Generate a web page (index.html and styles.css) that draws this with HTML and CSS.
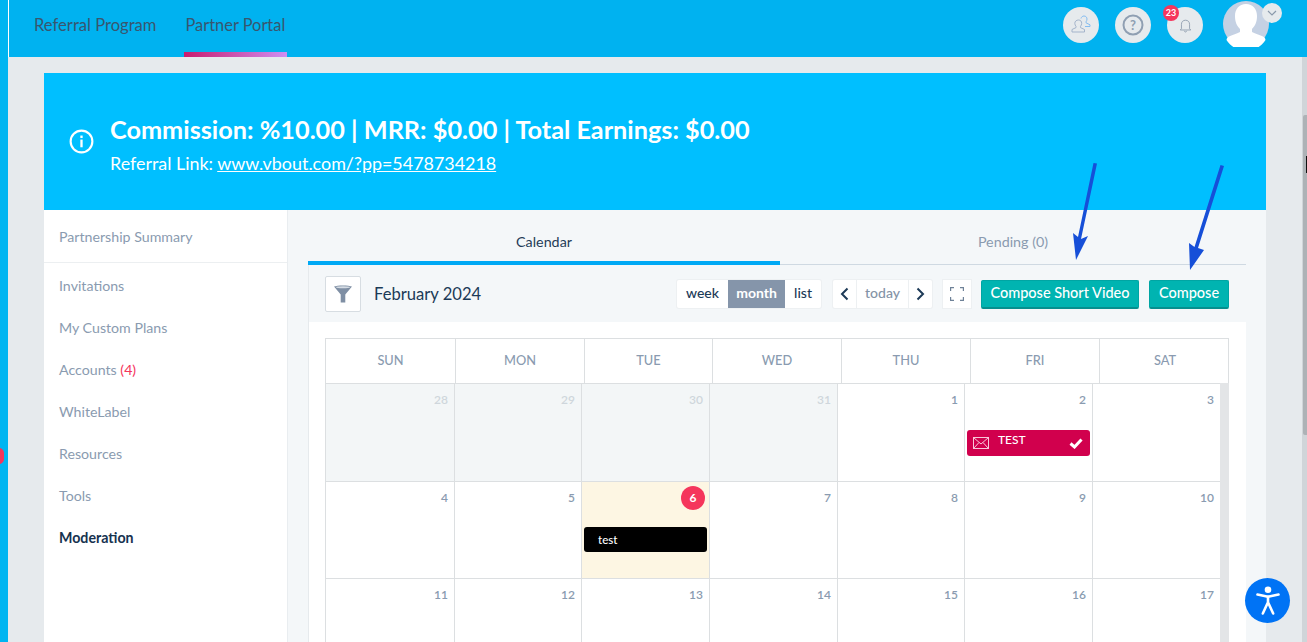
FILE: index.html
```html
<!DOCTYPE html>
<html lang="en">
<head>
<meta charset="utf-8">
<title>Partner Portal</title>
<link rel="stylesheet" href="styles.css">
</head>
<body>
<div class="rail"><span class="rail-badge"></span></div>
<div class="app">
  <header class="topbar">
    <nav class="topnav">
      <a class="toplink">Referral Program</a>
      <a class="toplink is-active">Partner Portal</a>
    </nav>
    <div class="topicons">
      <span class="roundbtn">
        <svg class="icon-users" width="20" height="18" viewBox="0 0 20 18" fill="none"><path d="M7.500 5c2 0 3.200 1.300 3.200 3.300 0 1.300-.6 2.400-1.200 3v1.300l4 1.900v2.500H1v-2.500l4-1.900v-1.300c-.6-.6-1.200-1.700-1.200-3C3.800 6.300 5.500 5 7.500 5z" stroke="#a4b4cb"/><path d="M10 3.500C10.500 1.800 11.600 1 13 1c1.800 0 3 1.300 3 3 0 1.200-.5 2.200-1 2.800v1l4 2v1.700h-5" stroke="#86bdf0"/></svg>
      </span>
      <span class="roundbtn">
        <svg width="22" height="22" viewBox="0 0 22 22" fill="none"><circle cx="11" cy="11" r="9.500" stroke="#8f9fb2" stroke-width="2"/><text class="helpmark" x="11" y="15.500" text-anchor="middle">?</text></svg>
      </span>
      <span class="roundbtn bell">
        <svg width="13" height="15" viewBox="0 0 16 18" fill="none" stroke="#8796a9"><path d="M3 13V7.500C3 4.500 5 2.500 8 2.500s5 2 5 5V13l1.500 1.500h-13z"/><path d="M6.500 15.500c.3 1 .8 1.500 1.500 1.500s1.200-.5 1.500-1.500"/></svg>
        <span class="count">23</span>
      </span>
      <span class="avatar">
        <svg width="46" height="46" viewBox="0 0 46 46"><circle cx="23" cy="23" r="23" fill="#c5d1e3"/><path d="M23 3c7 0 11 5 11 12 0 6-2 10-5 13v3c3 2 9 3 12 5 1 1 1.500 2 1.500 3a23 23 0 0 1-39 0c0-1 .5-2 1.500-3 3-2 9-3 12-5v-3c-3-3-5-7-5-13 0-7 4-12 11-12z" fill="#fff"/></svg>
        <span class="avatar-caret"><svg width="10" height="6" viewBox="0 0 10 6" fill="none"><path d="M1 1l4 4 4-4" stroke="#8a99ab" stroke-width="1.200"/></svg></span>
      </span>
    </div>
  </header>

  <div class="canvas">
    <div class="page">
      <section class="banner">
        <svg class="banner-icon" width="25" height="25" viewBox="0 0 26 26" fill="none"><circle cx="13" cy="13" r="11.300" stroke="#fff" stroke-width="2.200"/><rect x="11.800" y="11" width="2.400" height="8" fill="#fff"/><rect x="11.800" y="6.800" width="2.400" height="2.600" fill="#fff"/></svg>
        <div>
          <h1 class="banner-title">Commission: %10.00 | MRR: $0.00 | Total Earnings: $0.00</h1>
          <p class="banner-sub">Referral Link: <a class="banner-link">www.vbout.com/?pp=5478734218</a></p>
        </div>
      </section>

      <div class="body">
        <aside class="side">
          <a class="side-head">Partnership Summary</a>
          <ul class="side-list">
            <li>Invitations</li>
            <li>My Custom Plans</li>
            <li>Accounts <span class="side-count">(4)</span></li>
            <li>WhiteLabel</li>
            <li>Resources</li>
            <li>Tools</li>
            <li class="is-current">Moderation</li>
          </ul>
        </aside>

        <main class="content">
          <div class="tabs">
            <div class="tab is-on">Calendar</div>
            <div class="tab">Pending (0)</div>
          </div>
          <div class="panel">
            <div class="toolbar">
              <span class="filter">
                <svg width="18" height="18" viewBox="0 0 18 18"><path d="M0 1.500C3 0 15 0 18 1.500L11.300 9.500V17.500H6.700V9.500z" fill="#7f8fa4"/><ellipse cx="9" cy="2.300" rx="7" ry="1" fill="#d5dce4"/></svg>
              </span>
              <span class="month-title">February 2024</span>
              <div class="group views">
                <span class="gbtn w-week">week</span>
                <span class="gbtn w-month is-sel">month</span>
                <span class="gbtn w-list">list</span>
              </div>
              <div class="group navs">
                <span class="gbtn w-arrow"><svg width="9" height="14" viewBox="0 0 9 14" fill="none"><path d="M7.500 1.500L2 7l5.500 5.500" stroke="#1d3a57" stroke-width="2"/></svg></span>
                <span class="gbtn w-today">today</span>
                <span class="gbtn w-arrow"><svg width="9" height="14" viewBox="0 0 9 14" fill="none"><path d="M1.500 1.500L7 7l-5.500 5.500" stroke="#1d3a57" stroke-width="2"/></svg></span>
              </div>
              <span class="fullscreen">
                <svg width="14" height="14" viewBox="0 0 14 14" fill="none" stroke="#6f8298" stroke-width="1.200"><path d="M.6 4V.6H4M10 .6h3.400V4M13.400 10v3.400H10M4 13.400H.6V10"/></svg>
              </span>
              <button class="cta cta-video">Compose Short Video</button>
              <button class="cta cta-compose">Compose</button>
            </div>

            <div class="calendar">
              <div class="dow">
                <span>SUN</span><span>MON</span><span>TUE</span><span>WED</span><span>THU</span><span>FRI</span><span>SAT</span>
              </div>
              <div class="weeks">
                <div class="grid">
                  <div class="day off">28</div><div class="day off">29</div><div class="day off">30</div><div class="day off">31</div>
                  <div class="day">1</div>
                  <div class="day">2
                    <div class="event event-red">
                      <svg class="event-mail" width="16" height="12" viewBox="0 0 16 12" fill="none" stroke="#f8c6d9"><rect x=".5" y=".5" width="15" height="11"/><path d="M.5.500L8 7l7.500-6.500M.5 11.500L6 5.500M15.500 11.500L10 5.500"/></svg>
                      <span class="event-name">TEST</span>
                      <svg class="event-check" width="14" height="11" viewBox="0 0 14 11" fill="none"><path d="M1.500 5.500L5.500 9l7-7.500" stroke="#fff" stroke-width="3"/></svg>
                    </div>
                  </div>
                  <div class="day">3</div>
                  <div class="day">4</div><div class="day">5</div>
                  <div class="day today"><span class="today-num">6</span>
                    <div class="event event-black"><span class="event-label">test</span></div>
                  </div>
                  <div class="day">7</div><div class="day">8</div><div class="day">9</div><div class="day">10</div>
                  <div class="day">11</div><div class="day">12</div><div class="day">13</div><div class="day">14</div><div class="day">15</div><div class="day">16</div><div class="day">17</div>
                </div>
                <div class="cal-scroll"></div>
              </div>
            </div>
          </div>
        </main>
      </div>
    </div>
    <div class="page-scroll"><span class="page-thumb"></span><span class="page-mark"></span></div>
  </div>
</div>

<svg class="annot" width="1307" height="642" viewBox="0 0 1307 642" fill="#164fd8">
  <path d="M1093.500 163L1097 163.500 1081 239 1088 236 1076 260 1073 233 1078 237z"/>
  <path d="M1220.500 165L1224 166 1198 248 1204 250 1190 270 1189 243 1194.500 247z"/>
</svg>

<span class="a11y">
  <svg width="32" height="32" viewBox="0 0 32 32" fill="none" stroke="#fff" stroke-linecap="round" stroke-linejoin="round"><circle cx="16" cy="4.700" r="3.300" fill="#fff" stroke="none"/><path d="M5.500 9.500L16 11.700 26.500 9.500" stroke-width="2.600"/><path d="M16 11.700v5.600M16 17.300L10.800 28.500M16 17.300l5.200 11.200" stroke-width="2.600"/></svg>
</span>
</body>
</html>
```
FILE: styles.css
```css
* { box-sizing: border-box; }
html, body { margin: 0; height: 642px; overflow: hidden; }
body {
  display: flex;
  font-family: Lato, "Open Sans", sans-serif;
  background: #e6eaed;
  color: #1b3a57;
}
.rail {
  width: 8px;
  flex: none;
  background: #00b5f1;
  position: relative;
}
.rail-badge {
  position: absolute;
  left: -6px;
  top: 448px;
  width: 10px;
  height: 16px;
  border-radius: 5px;
  background: #f5365c;
}
.app { flex: 1; min-width: 0; display: flex; flex-direction: column; }

.topbar {
  height: 57px;
  flex: none;
  background: #00b2f0;
  border-left: 1px solid #fff;
  display: flex;
  justify-content: space-between;
}
.topnav { display: flex; padding-left: 23px; gap: 25px; }
.toplink {
  height: 57px;
  padding: 14px 2px 0;
  font-size: 16.600px;
  line-height: 22px;
  white-space: nowrap;
  color: #38566f;
  border-bottom: 5px solid transparent;
}
.toplink.is-active {
  width: 103px;
  padding: 14px 0 0 2px;
  font-size: 16.400px;
  border-image: linear-gradient(90deg, #c81a6c, #cf90f4) 1;
}
.topicons { display: flex; align-items: flex-start; gap: 16px; padding: 7px 38px 0 0; }
.roundbtn {
  width: 36px;
  height: 36px;
  border-radius: 50%;
  background: #e6eaed;
  display: flex;
  align-items: center;
  justify-content: center;
  position: relative;
}
.icon-users { margin-top: -2px; }
.helpmark { font: 700 13px Lato, sans-serif; fill: #8f9fb2; }
.count {
  position: absolute;
  left: -4px;
  top: -2px;
  width: 16px;
  height: 16px;
  border-radius: 50%;
  background: #f5365c;
  color: #fff;
  font-size: 9px;
  font-weight: 700;
  line-height: 16px;
  text-align: center;
}
.avatar { position: relative; width: 46px; height: 46px; margin: -6px 0 0 4px; }
.avatar svg { display: block; }
.avatar-caret {
  position: absolute;
  left: 39px;
  top: 2px;
  width: 20px;
  height: 20px;
  border-radius: 50%;
  background: #e6eaed;
  display: flex;
  align-items: center;
  justify-content: center;
}

.canvas { flex: 1; min-height: 0; display: flex; }
.page { flex: 1; min-width: 0; padding: 16px 36px 0 36px; display: flex; flex-direction: column; }
.page-scroll { width: 5px; flex: none; background: #d0d5d9; padding: 58px 0 0 1px; position: relative; }
.page-thumb { display: block; height: 320px; background: #adb2b6; border-radius: 2px 0 0 2px; }
.page-mark { position: absolute; right: 0; top: 99px; width: 1px; height: 17px; background: #111; }

.banner {
  height: 137px;
  flex: none;
  background: #00bfff;
  display: flex;
  align-items: center;
  gap: 16px;
  padding: 5px 0 0 25px;
  color: #fff;
}
.banner-icon { flex: none; margin-bottom: 6px; }
.banner-title { margin: 0; font-size: 25.250px; line-height: 30px; font-weight: 700; }
.banner-sub { margin: 7px 0 0; font-size: 17.900px; line-height: 24px; }
.banner-link { text-decoration: underline; }

.body { flex: 1; min-height: 0; display: flex; }
.side {
  width: 244px;
  flex: none;
  background: #fff;
  border-right: 1px solid #e9edf0;
  font-size: 14.200px;
  color: #8a9bb0;
}
.side-head {
  display: block;
  height: 53px;
  padding: 17px 15px 0;
  line-height: 19px;
  border-bottom: 1px solid #eceff1;
}
.side-list { list-style: none; margin: 0; padding: 2px 15px 0; }
.side-list li { height: 42px; line-height: 42px; }
.side-count { color: #f5365c; }
.side-list .is-current { color: #16324f; font-weight: 700; }

.content { flex: 1; min-width: 0; background: #f4f7f9; padding: 0 20px; display: flex; flex-direction: column; }
.tabs { height: 55px; flex: none; display: flex; }
.tab {
  text-align: center;
  font-size: 14.300px;
  line-height: 20px;
  padding-top: 22px;
  color: #8a9bb0;
  border-bottom: 1px solid #cfd9e2;
  width: 466px;
}
.tab.is-on { width: 472px; color: #1f3c57; border-bottom: 4px solid #00a9f5; }

.panel { flex: 1; min-height: 0; border-left: 1px solid #e6eaed; display: flex; flex-direction: column; }
.toolbar {
  height: 57px;
  flex: none;
  display: flex;
  align-items: center;
  padding: 1px 0 0 16px;
  background: #f4f7f9;
}
.filter {
  width: 36px;
  height: 36px;
  flex: none;
  background: #fff;
  border: 1px solid #d7dde2;
  border-radius: 2px;
  display: flex;
  align-items: center;
  justify-content: center;
}
.month-title { margin-left: 13px; width: 303px; flex: none; font-size: 16.600px; }
.group { display: flex; height: 28px; background: #fff; box-shadow: 0 0 0 1px #edf0f2; border-radius: 2px; }
.navs { margin-left: 12px; }
.gbtn {
  display: flex;
  align-items: center;
  justify-content: center;
  padding-bottom: 3px;
  font-size: 14px;
  font-weight: 500;
  color: #1b3a57;
}
.w-week { width: 51px; }
.w-month { width: 57px; }
.w-list { width: 36px; }
.w-arrow { width: 23px; padding-bottom: 0; }
.w-today { width: 53px; color: #8493a6; border-left: 1px solid #edf0f2; border-right: 1px solid #edf0f2; }
.is-sel { background: #8595aa; color: #fff; font-weight: 700; }
.fullscreen {
  width: 28px;
  height: 28px;
  margin-left: 11px;
  background: #fff;
  box-shadow: 0 0 0 1px #edf0f2;
  display: flex;
  align-items: center;
  justify-content: center;
}
.cta {
  height: 29px;
  padding: 0 0 2px;
  border: 1px solid #00a5a3;
  border-bottom: 2px solid #068f8e;
  border-radius: 2px;
  background: #00b4b1;
  color: #fff;
  font: 500 14.500px Lato, sans-serif;
}
.cta-video { width: 158px; margin-left: 10px; }
.cta-compose { width: 80px; margin-left: 10px; }

.calendar { flex: 1; min-height: 0; background: #fff; padding: 16px 17px 0 16px; overflow: hidden; }
.dow {
  display: grid;
  grid-template-columns: 130px 129px 128px 129px 129px 129px 130px;
  height: 45px;
  border: 1px solid #dcdfe1;
  border-bottom: 0;
}
.dow span {
  display: flex;
  align-items: center;
  justify-content: center;
  padding-bottom: 3px;
  font-size: 12.800px;
  font-weight: 500;
  color: #8a9bb0;
  border-right: 1px solid #dcdfe1;
}
.dow span:last-child { border-right: 0; }
.weeks { display: flex; }
.grid {
  width: 895px;
  flex: none;
  display: grid;
  grid-template-columns: 129px 127px 128px 128px 127px 128px 128px;
  grid-template-rows: 98px;
  grid-auto-rows: 97px;
  border-top: 1px solid #dcdfe1;
}
.day {
  border-left: 1px solid #dcdfe1;
  border-bottom: 1px solid #dcdfe1;
  padding: 8px 6px 0 0;
  text-align: right;
  font-size: 12px;
  font-weight: 600;
  line-height: 15px;
  color: #8a9bb0;
  position: relative;
}
.day.off { background: #f3f6f7; color: #cfd6dc; }
.today { background: #fdf6e3; }
.today-num {
  position: absolute;
  right: 4px;
  top: 4px;
  width: 24px;
  height: 24px;
  border-radius: 50%;
  background: #f5365c;
  color: #fff;
  font-weight: 700;
  text-align: center;
  line-height: 24px;
}
.event {
  position: absolute;
  left: 2px;
  right: 2px;
  border-radius: 3px;
  text-align: left;
  color: #fff;
  font-weight: 500;
}
.event-red { top: 46px; height: 26px; background: #d1004d; }
.event-black { top: 45px; height: 25px; background: #000; }
.event-mail { position: absolute; left: 6px; top: 7px; }
.event-name { position: absolute; left: 31px; top: 2px; font-size: 12px; }
.event-check { position: absolute; right: 7px; top: 8px; }
.event-label { position: absolute; left: 14px; top: 5px; font-size: 11.500px; }
.cal-scroll { width: 9px; flex: none; height: 300px; background: #e3e5e7; }

.annot { position: fixed; left: 0; top: 0; pointer-events: none; }
.a11y {
  position: fixed;
  left: 1245px;
  top: 578px;
  width: 45px;
  height: 45px;
  border-radius: 50%;
  background: #0073f5;
  display: flex;
  align-items: center;
  justify-content: center;
}
```
